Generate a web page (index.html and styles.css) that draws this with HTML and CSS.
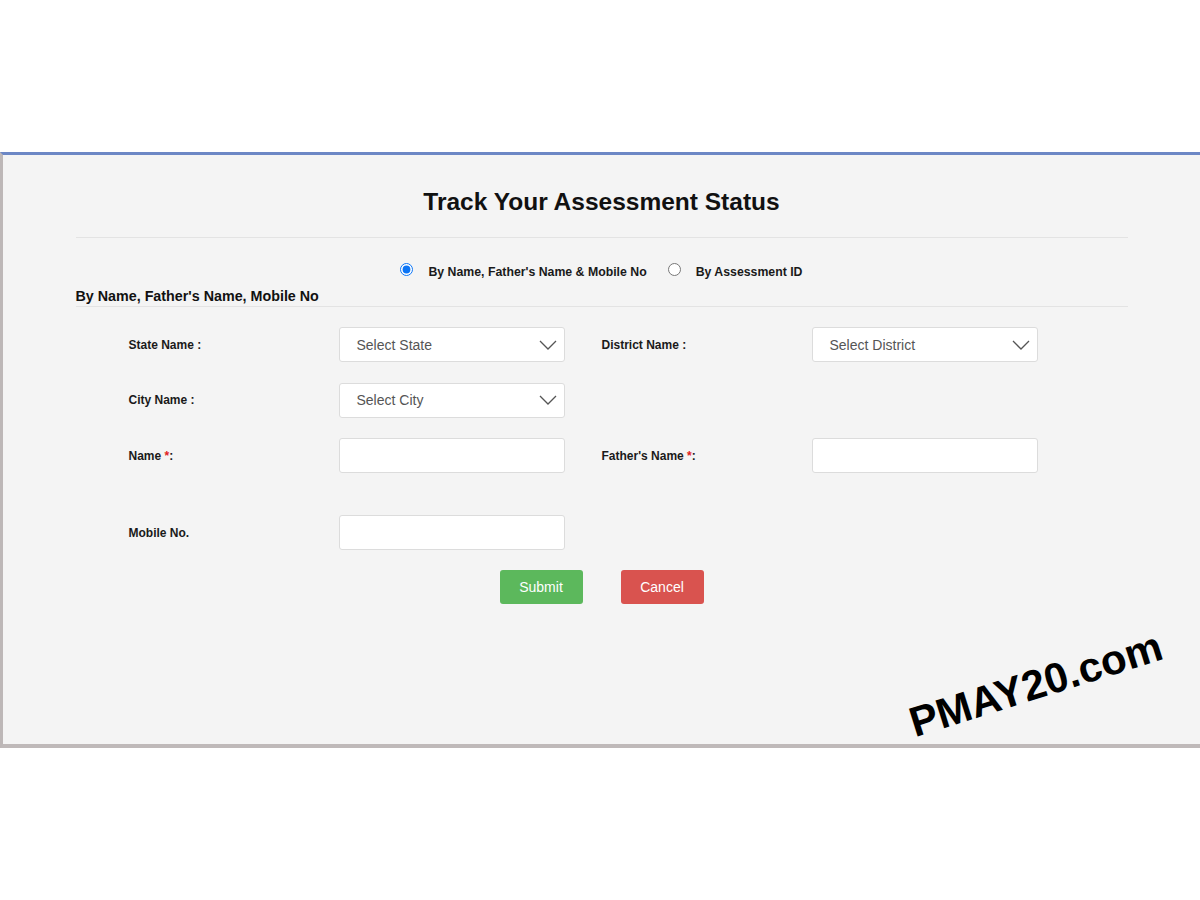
FILE: index.html
```html
<!DOCTYPE html>
<html>
<head>
<meta charset="utf-8">
<link rel="stylesheet" href="styles.css">
</head>
<body>
<div class="frame">
  <div class="container">
    <h1 class="title">Track Your Assessment Status</h1>
    <div class="radios">
      <label class="radio"><input type="radio" name="mode" checked><span>By Name, Father's Name &amp; Mobile No</span></label>
      <label class="radio"><input type="radio" name="mode"><span>By Assessment ID</span></label>
    </div>
    <h2 class="subhead">By Name, Father's Name, Mobile No</h2>
    <div class="form">
      <div class="row">
        <div class="field">
          <div class="label">State Name :</div>
          <div class="select"><span>Select State</span><svg class="chev" viewBox="0 0 18 10"><path d="M1 1 L9 9 L17 1" /></svg></div>
        </div>
        <div class="field">
          <div class="label">District Name :</div>
          <div class="select"><span>Select District</span><svg class="chev" viewBox="0 0 18 10"><path d="M1 1 L9 9 L17 1" /></svg></div>
        </div>
      </div>
      <div class="row">
        <div class="field">
          <div class="label">City Name :</div>
          <div class="select"><span>Select City</span><svg class="chev" viewBox="0 0 18 10"><path d="M1 1 L9 9 L17 1" /></svg></div>
        </div>
      </div>
      <div class="row">
        <div class="field">
          <div class="label">Name <span class="req">*</span>:</div>
          <div class="input"></div>
        </div>
        <div class="field">
          <div class="label">Father's Name <span class="req">*</span>:</div>
          <div class="input"></div>
        </div>
      </div>
      <div class="row row-mobile">
        <div class="field">
          <div class="label">Mobile No.</div>
          <div class="input"></div>
        </div>
      </div>
      <div class="buttons">
        <button class="btn btn-submit">Submit</button>
        <button class="btn btn-cancel">Cancel</button>
      </div>
    </div>
  </div>
  <div class="watermark">PMAY20.com</div>
</div>
</body>
</html>
```
FILE: styles.css
```css
html, body {
  margin: 0;
  padding: 0;
  background: #ffffff;
  font-family: "Liberation Sans", Arial, sans-serif;
}
.frame {
  position: relative;
  margin-top: 152px;
  height: 589px;
  background: #f4f4f4;
  border-top: 3px solid #6c87c5;
  border-left: 3px solid #bdb7b7;
  border-bottom: 4px solid #bfb9b9;
  overflow: hidden;
}
.container {
  width: 1052px;
  margin: 0 auto;
}
.title {
  margin: 32px 0 0;
  height: 30px;
  line-height: 30px;
  padding-bottom: 20px;
  border-bottom: 1px solid #e3e3e3;
  text-align: center;
  font-size: 24.5px;
  font-weight: bold;
  color: #111;
}
.radios {
  margin-top: 23px;
  height: 18px;
  display: flex;
  justify-content: center;
  gap: 21px;
  padding-right: 0;
}
.radio {
  display: flex;
  align-items: center;
  gap: 15px;
  font-size: 12.3px;
  font-weight: bold;
  color: #1a1a1a;
}
.radio span {
  padding-top: 4px;
}
.radio input {
  margin: 0 0 2px 0;
  width: 13px;
  height: 13px;
  accent-color: #0b74f5;
}
.subhead {
  margin: 8px 0 0;
  height: 18px;
  line-height: 18px;
  padding-bottom: 1px;
  border-bottom: 1px solid #e3e3e3;
  font-size: 14.3px;
  font-weight: bold;
  color: #111;
}
.form {
  padding-left: 53px;
  padding-top: 20px;
}
.row {
  display: flex;
  gap: 37px;
  margin-bottom: 20.5px;
}
.row-mobile {
  margin-top: 42px;
  margin-bottom: 20px;
}
.field {
  display: flex;
  align-items: center;
}
.label {
  width: 210px;
  font-size: 12px;
  font-weight: bold;
  color: #1a1a1a;
}
.req {
  color: #e02020;
}
.select, .input {
  box-sizing: border-box;
  width: 226px;
  height: 35px;
  background: #fff;
  border: 1px solid #dcdcdc;
  border-radius: 3px;
}
.select {
  display: flex;
  align-items: center;
  justify-content: space-between;
  padding: 0 7px 0 17px;
  font-size: 14px;
  color: #555;
}
.chev {
  width: 18px;
  height: 10px;
  fill: none;
  stroke: #555;
  stroke-width: 1.3;
}
.buttons {
  display: flex;
  justify-content: center;
  gap: 38px;
  margin-left: -53px;
}
.btn {
  width: 83px;
  height: 34px;
  border: none;
  border-radius: 3px;
  color: #fff;
  font-family: "Liberation Sans", Arial, sans-serif;
  font-size: 14px;
}
.btn-submit {
  background: #5cb85c;
}
.btn-cancel {
  background: #d9534f;
}
.watermark {
  position: absolute;
  left: 914px;
  top: 547px;
  font-size: 42px;
  font-weight: bold;
  color: #000;
  transform: rotate(-17.5deg);
  transform-origin: left bottom;
  white-space: nowrap;
  line-height: 1;
}
```
